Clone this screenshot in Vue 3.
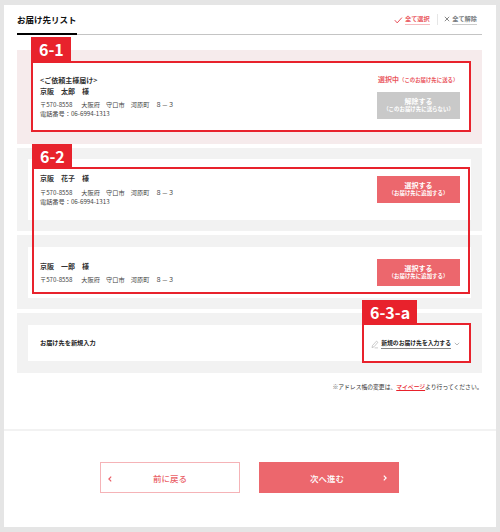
<script setup>
const addressees = [
  { name: '京阪　花子　様', phone: '電話番号：06-6994-1313', kind: 'second' },
  { name: '京阪　一郎　様', phone: '', kind: 'third' },
]
</script>

<template>
  <div class="frame">
    <main class="page">
      <header class="head">
        <h1 class="title">お届け先リスト</h1>
        <div class="bulk">
          <svg class="check" viewBox="0 0 9 8"><path d="M0.8 4.2 L3.2 6.9 L7.9 1.6" /></svg>
          <a class="all">全て選択</a>
          <span class="sep"></span>
          <svg class="cross" viewBox="0 0 6 6"><path d="M0.8 0.8 L5.2 5.2 M5.2 0.8 L0.8 5.2" /></svg>
          <a class="all none">全て解除</a>
        </div>
      </header>

      <section class="panel first">
        <div class="card">
          <div class="info">
            <p class="name owner">&lt;ご依頼主様届け&gt;</p>
            <p class="name">京阪　太郎　様</p>
            <p class="line"><span class="zip">〒570-8558</span>大阪府　守口市　河原町　８－３</p>
            <p class="line">電話番号：06-6994-1313</p>
          </div>
          <div class="side">
            <p class="status">選択中<small>（このお届け先に送る）</small></p>
            <button class="pick off"><b>解除する</b><small>（このお届け先に送らない）</small></button>
          </div>
        </div>
        <div class="mark mark1"><span class="tag">6-1</span></div>
      </section>

      <section v-for="a in addressees" :key="a.name" class="panel" :class="a.kind">
        <div class="card">
          <div class="info">
            <p class="name">{{ a.name }}</p>
            <p class="line"><span class="zip">〒570-8558</span>大阪府　守口市　河原町　８－３</p>
            <p v-if="a.phone" class="line">{{ a.phone }}</p>
          </div>
          <button class="pick"><b>選択する</b><small>（お届け先に追加する）</small></button>
        </div>
      </section>
      <div class="mark mark2"><span class="tag">6-2</span></div>

      <section class="panel new">
        <div class="card">
          <p class="newlabel">お届け先を新規入力</p>
          <div class="entry">
            <svg class="pencil" viewBox="0 0 8 9"><path d="M1 7.6 L1.5 5.5 L5.5 1.1 L6.9 2.3 L3 6.8 Z M3.6 7.9 H7" /></svg>
            <a class="newlink">新規のお届け先を入力する</a>
            <svg class="down" viewBox="0 0 6 4"><path d="M0.8 0.8 L3 3 L5.2 0.8" /></svg>
          </div>
        </div>
      </section>
      <div class="mark mark3"><span class="tag">6-3-a</span></div>

      <p class="note">※アドレス帳の変更は、<a>マイページ</a>より行ってください。</p>

      <footer class="foot">
        <button class="nav back">
          <svg viewBox="0 0 4 6"><path d="M3.2 0.7 L0.9 3 L3.2 5.3" /></svg>前に戻る
        </button>
        <button class="nav next">
          次へ進む<svg viewBox="0 0 4 6"><path d="M0.8 0.7 L3.1 3 L0.8 5.3" /></svg>
        </button>
      </footer>
    </main>
  </div>
</template>

<style>
body {
  margin: 0;
  background: #e5e5e5;
}
</style>

<style scoped>
* {
  box-sizing: border-box;
}
p,
h1 {
  margin: 0;
  white-space: nowrap;
}
svg {
  display: block;
  fill: none;
  flex: none;
}
.frame {
  height: 532px;
  padding: 5px 4px;
  background: #e5e5e5;
  overflow: hidden;
  font-family: "Noto Sans CJK JP", sans-serif;
  color: #222;
}
.page {
  position: relative;
  height: 522px;
  background: #fff;
  display: flex;
  flex-direction: column;
}
.head {
  display: flex;
  justify-content: space-between;
  height: 30px;
  margin: 0 14px 15px 13px;
  border-bottom: 1px solid #c4c4c4;
}
.title {
  width: 60px;
  height: 30px;
  border-bottom: 2px solid #000;
  font-size: 8.5px;
  line-height: 29px;
  font-weight: 700;
  color: #111;
}
.bulk {
  display: flex;
  align-items: flex-start;
  padding: 8px 5px 0 0;
}
.check {
  width: 9px;
  height: 8px;
  margin: 3px 2.5px 0 0;
  stroke: #e8505a;
  stroke-width: 1;
}
.all {
  font-size: 6.2px;
  line-height: 11px;
  height: 12px;
  font-weight: 700;
  color: #ea5861;
  border-bottom: 1px solid #f5bcc0;
}
.sep {
  width: 1px;
  height: 11px;
  margin: 1px 6px 0 7.5px;
  background: #e6e6e6;
}
.cross {
  width: 6px;
  height: 6px;
  margin: 3px 2px 0 0;
  stroke: #555;
  stroke-width: 0.7;
}
.none {
  color: #75797c;
  border-color: #ccc;
}
.panel {
  flex: none;
  margin: 0 14px 4px 13px;
  padding: 11px 11px 0;
  background: #f2f2f2;
}
.card {
  display: flex;
  justify-content: space-between;
  padding: 0 11px 0 12px;
  background: #fff;
}
.first {
  position: relative;
  height: 94px;
  background: #f6ebec;
  padding: 11px 12px 0 14px;
}
.first .card {
  height: 70px;
  padding: 15px 10px 0 9px;
}
.second {
  height: 83px;
}
.second .card {
  height: 61px;
  padding-top: 14px;
}
.third {
  height: 74px;
  padding-top: 12px;
}
.third .card {
  height: 51px;
  padding-top: 13px;
}
.second .pick {
  margin-top: 3px;
}
.third .pick {
  margin-top: -1px;
}
.name {
  font-size: 7px;
  line-height: 10px;
  font-weight: 700;
  color: #333;
}
.first .owner {
  margin-top: -1px;
  margin-bottom: 1px;
}
.third .name {
  margin-top: 1px;
}
.line {
  font-size: 6.2px;
  line-height: 9.4px;
  color: #444;
}
.name + .line {
  margin-top: 4px;
}
.second .name + .line {
  margin-top: 5px;
}
.zip {
  display: inline-block;
  width: 41.3px;
}
.side {
  width: 83px;
}
.status {
  font-size: 7px;
  line-height: 8px;
  height: 16px;
  margin-top: -1px;
  margin-bottom: 1px;
  padding-left: 1px;
  font-weight: 700;
  color: #ea5861;
}
.status small {
  font-size: 5.4px;
}
.pick {
  display: flex;
  flex-direction: column;
  align-items: center;
  width: 83px;
  height: 27px;
  padding: 5px 0 0;
  border: 0;
  background: #ec676d;
  color: #fff;
  font-family: inherit;
  white-space: nowrap;
}
.off {
  background: #c9c9c9;
}
.pick b {
  font-size: 7px;
  line-height: 9px;
  font-weight: 700;
}
.pick small {
  font-size: 5.45px;
  line-height: 7px;
  font-weight: 700;
}
.new {
  height: 60px;
  margin-bottom: 0;
  padding-top: 12px;
}
.new .card {
  height: 36px;
  align-items: center;
}
.newlabel {
  font-size: 6.2px;
  line-height: 10px;
  padding-bottom: 1px;
  font-weight: 700;
}
.entry {
  display: flex;
  align-items: center;
}
.pencil {
  width: 8px;
  height: 9px;
  margin: 2px 2.5px 0 0;
  stroke: #aaa;
  stroke-width: 0.6;
}
.newlink {
  font-size: 5.82px;
  line-height: 9px;
  height: 11px;
  font-weight: 700;
  border-bottom: 1px solid #888;
  white-space: nowrap;
}
.down {
  width: 6px;
  height: 4px;
  margin: 1px 0 0 3px;
  stroke: #999;
  stroke-width: 0.7;
}
.mark {
  position: absolute;
  border: 2px solid #e8222c;
}
.tag {
  position: absolute;
  left: -2px;
  bottom: 100%;
  height: 26px;
  padding: 0 8px;
  background: #e8222c;
  color: #fff;
  font-size: 16px;
  line-height: 25px;
  font-weight: 700;
  white-space: nowrap;
}
.mark1 {
  left: 14px;
  top: 11px;
  width: 440px;
  height: 71px;
}
.mark2 {
  left: 28px;
  top: 162px;
  width: 438px;
  height: 127px;
}
.mark3 {
  left: 358px;
  top: 318px;
  width: 109px;
  height: 40px;
}
.mark1 .tag,
.mark2 .tag {
  width: 40px;
}
.mark3 .tag {
  width: 55px;
}
.mark3 .tag,
.mark2 .tag {
  height: 25px;
  line-height: 24px;
}
.note {
  margin: 9px 13.5px 0 0;
  font-size: 5.8px;
  line-height: 9px;
  text-align: right;
  color: #333;
}
.note a {
  color: #e8222c;
  font-weight: 500;
  text-decoration: underline;
}
.foot {
  display: flex;
  justify-content: center;
  gap: 19px;
  margin-top: 38px;
  padding: 31px 1px 0 0;
  border-top: 2px solid #f2f2f2;
}
.nav {
  position: relative;
  display: flex;
  align-items: center;
  justify-content: center;
  width: 140px;
  height: 31px;
  padding: 0;
  border: 0;
  font-family: inherit;
  font-size: 8.5px;
  line-height: 12px;
  font-weight: 500;
}
.nav svg {
  position: absolute;
  top: 13px;
  width: 4px;
  height: 6px;
  stroke: currentColor;
  stroke-width: 1.2;
}
.back {
  border: 1px solid #f5b3b7;
  background: #fff;
  color: #ea5f67;
}
.back svg {
  left: 7px;
}
.next {
  background: #ec676d;
  color: #fff;
  padding-right: 4px;
}
.next svg {
  right: 12px;
}
</style>
